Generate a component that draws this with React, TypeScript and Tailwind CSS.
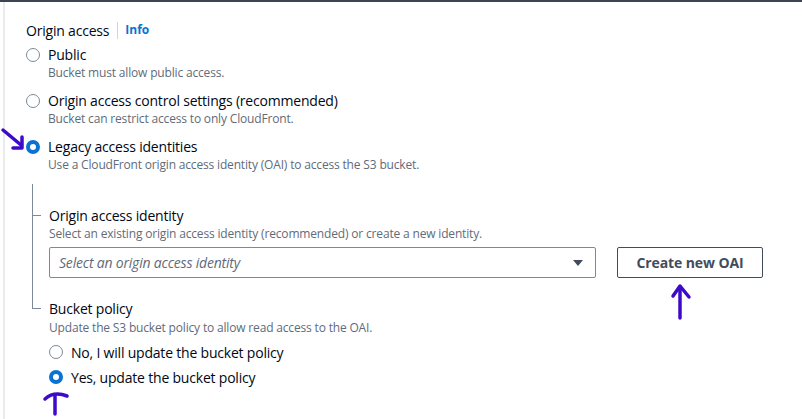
import React from "react";

const Radio = ({ checked }: { checked?: boolean }) => (
  <span
    className={
      checked
        ? "box-border shrink-0 w-[14px] h-[14px] rounded-full border-[4px] border-[#0972d3] bg-white"
        : "box-border shrink-0 w-[14px] h-[14px] rounded-full border-[1.5px] border-[#7d8998] bg-white"
    }
  />
);

const Option = ({
  label,
  desc,
  checked,
}: {
  label: string;
  desc: string;
  checked?: boolean;
}) => (
  <div className="flex flex-col">
    <div className="flex items-center gap-[8px] h-[20px]">
      <Radio checked={checked} />
      <span className="text-[14px] leading-[20px] tracking-[-0.2px] text-[#000716]">{label}</span>
    </div>
    <div className="pl-[22px] text-[12px] leading-[16px] tracking-[-0.17px] text-[#5f6b7a]">{desc}</div>
  </div>
);

const Arrows = () => (
  <>
    {/* hand drawn annotation arrows */}
    <svg className="absolute left-0 top-0" width="802" height="419">
      <g fill="none" stroke="#3c0ac8" strokeWidth="3.5" strokeLinecap="round" strokeLinejoin="round">
        <path d="M3 128 L21 143" />
        <path d="M22 135 L22 146 L13 146" />
        <path d="M680 316 L680 285" />
        <path d="M673 294 L680 284 L689 295" />
        <path d="M55 393 L55 412" />
        <path d="M45 397 Q54 389 67 394" />
      </g>
    </svg>
  </>
);

export default function App() {
  return (
    <div className="relative w-[802px] h-[419px] overflow-hidden bg-white border-t-2 border-[#3b4552] font-['Open_Sans',sans-serif]">
      <div className="h-full ml-[3px] border-l-2 border-[#e9ebed] pl-[21px] pt-[18px]">
        <div className="flex items-center h-[20px]">
          <span className="text-[14px] tracking-[-0.2px] text-[#000716]">Origin access</span>
          <span className="ml-[8px] mr-[7px] w-px h-[17px] bg-[#d1d5db]" />
          <span className="text-[12px] font-bold text-[#0972d3]">Info</span>
        </div>

        <div className="mt-[5px] flex flex-col gap-[10px]">
          <Option label="Public" desc="Bucket must allow public access." />
          <Option
            label="Origin access control settings (recommended)"
            desc="Bucket can restrict access to only CloudFront."
          />
          <Option
            label="Legacy access identities"
            desc="Use a CloudFront origin access identity (OAI) to access the S3 bucket."
            checked
          />
        </div>

        <div className="mt-[11px] ml-[6px]">
          <div className="border-l border-[#7d8998] pt-[21px] pb-[21px]">
            <div className="flex items-center h-[20px] gap-[8px]">
              <span className="w-[8px] h-px bg-[#7d8998]" />
              <span className="text-[14px] tracking-[-0.2px] text-[#000716]">Origin access identity</span>
            </div>
            <div className="pl-[16px]">
              <div className="mt-[1px] text-[12px] leading-[16px] tracking-[-0.17px] text-[#5f6b7a]">
                Select an existing origin access identity (recommended) or create a new identity.
              </div>
              <div className="mt-[5px] flex">
                <div className="flex items-center w-[547px] h-[31px] border border-[#7d8998] rounded-[2px] pl-[9px] pr-[12px]">
                  <span className="flex-1 italic text-[14px] tracking-[-0.2px] text-[#5f6b7a]">
                    Select an origin access identity
                  </span>
                  <svg width="10" height="6" viewBox="0 0 10 6">
                    <polygon points="0,0 10,0 5,6" fill="#414d5c" />
                  </svg>
                </div>
                <div className="ml-[21px] w-[146px] h-[31px] border border-[#414d5c] rounded-[2px] flex items-center justify-center text-[14px] font-bold tracking-[-0.1px] text-[#414d5c]">
                  Create new OAI
                </div>
              </div>
            </div>
          </div>

          <div className="flex items-start">
            <span className="box-border w-[9px] h-[10px] border-l border-b border-[#7d8998]" />
            <div className="ml-[8px] flex flex-col">
              <span className="text-[14px] leading-[20px] tracking-[-0.2px] text-[#000716]">Bucket policy</span>
              <span className="mt-[1px] text-[12px] leading-[16px] tracking-[-0.17px] text-[#5f6b7a]">
                Update the S3 bucket policy to allow read access to the OAI.
              </span>
              <div className="mt-[6px] flex flex-col gap-[5px]">
                <div className="flex items-center gap-[8px] h-[20px]">
                  <Radio />
                  <span className="text-[14px] tracking-[-0.2px] text-[#000716]">No, I will update the bucket policy</span>
                </div>
                <div className="flex items-center gap-[8px] h-[20px]">
                  <Radio checked />
                  <span className="text-[14px] tracking-[-0.2px] text-[#000716]">Yes, update the bucket policy</span>
                </div>
              </div>
            </div>
          </div>
        </div>
      </div>
      <Arrows />
    </div>
  );
}
